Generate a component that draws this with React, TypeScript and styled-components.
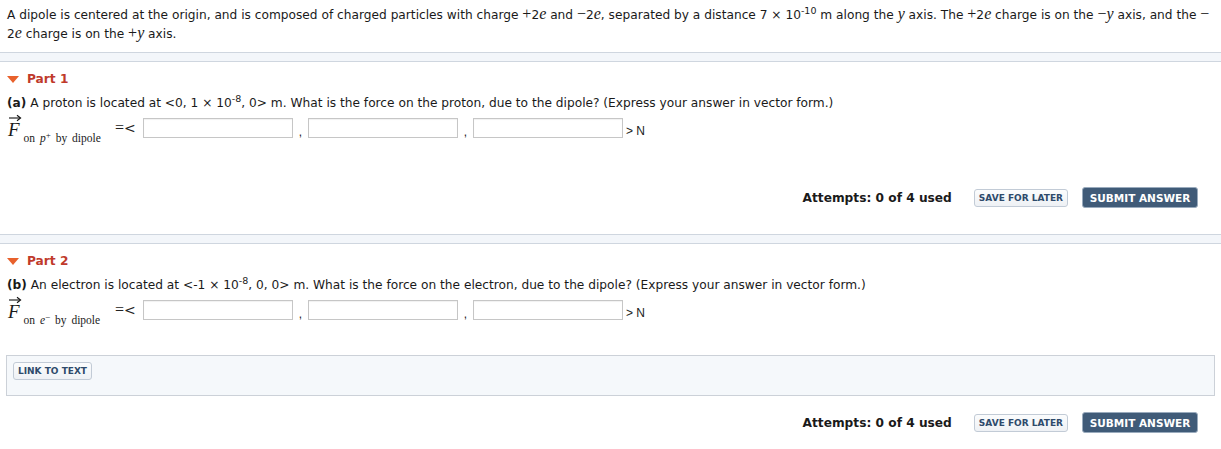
import React from "react";
import styled, { createGlobalStyle } from "styled-components";

const GlobalStyle = createGlobalStyle`
  html, body {
    margin: 0;
    padding: 0;
    background: #ffffff;
  }
  body {
    font-family: "DejaVu Sans", Verdana, sans-serif;
    font-size: 12.2px;
    color: #1a1a1a;
  }
`;

const Page = styled.div`
  width: 1221px;
  height: 449px;
  overflow: hidden;
`;

const Intro = styled.p`
  margin: 0;
  padding: 5px 7px 9px 7px;
  line-height: 18px;
`;

const Band = styled.div`
  height: 8px;
  background: #f3f6fa;
  border-top: 1px solid #cfd6df;
  border-bottom: 1px solid #cfd6df;
`;

const Math = styled.span`
  font-family: "Liberation Serif", "Times New Roman", serif;
  font-size: 16px;
`;

const Var = styled(Math)`
  font-style: italic;
`;

const Sup = styled.sup`
  font-size: 9.5px;
  line-height: 0;
  vertical-align: 5px;
`;

const Part = styled.section`
  padding: 8px 7px 0 7px;
`;

const PartHeader = styled.div`
  display: flex;
  align-items: center;
  gap: 8px;
  height: 18px;
`;

const Caret = styled.span`
  width: 0;
  height: 0;
  border-left: 6px solid transparent;
  border-right: 6px solid transparent;
  border-top: 7px solid #e8612c;
`;

const PartTitle = styled.span`
  color: #c03a2b;
  font-weight: bold;
`;

const Question = styled.div`
  margin-top: 6px;
  line-height: 18px;
`;

const AnswerRow = styled.div`
  display: flex;
  align-items: center;
  margin-top: 6px;
  height: 20px;
`;

const Label = styled.div`
  display: flex;
  align-items: flex-end;
  width: 108px;
  height: 20px;
  font-family: "Liberation Serif", "Times New Roman", serif;
`;

const VecF = styled.span`
  position: relative;
  font-style: italic;
  font-size: 19px;
  line-height: 16px;
  padding: 0 2px 0 1px;
`;

const Arrow = styled.svg`
  position: absolute;
  left: 1px;
  top: -8px;
`;

const Sub = styled.span`
  font-size: 11.5px;
  margin-left: 2px;
  position: relative;
  top: 6px;
  white-space: nowrap;
  word-spacing: 2px;
`;

const SubVar = styled.i`
  font-size: 11.5px;
`;

const Charge = styled.span`
  font-size: 9px;
  position: relative;
  top: -4px;
`;

const Equals = styled.span`
  width: 28px;
  font-size: 14px;
  color: #222;
`;

const Field = styled.input`
  box-sizing: border-box;
  width: 150px;
  height: 20px;
  border: 1px solid #c6c6c6;
  box-shadow: inset 0 1px 1px rgba(0, 0, 0, 0.06);
  padding: 0 4px;
  margin: 0;
  background: #fff;
`;

const Comma = styled.span`
  width: 15px;
  text-align: center;
  align-self: flex-end;
  font-family: "Liberation Sans", Arial, sans-serif;
  font-size: 12px;
  line-height: 12px;
`;

const Unit = styled.span`
  align-self: flex-end;
  margin-left: 3px;
  font-family: "Liberation Sans", Arial, sans-serif;
  font-size: 12px;
  line-height: 12px;
  margin-bottom: 1px;
`;

const Footer = styled.div<{ $top: number }>`
  display: flex;
  justify-content: flex-end;
  align-items: center;
  gap: 14px;
  margin-top: ${(p) => p.$top}px;
  padding-right: 23px;
  height: 21px;
`;

const Attempts = styled.span`
  font-weight: bold;
  margin-right: 8px;
`;

const LightButton = styled.button`
  box-sizing: border-box;
  height: 18px;
  padding: 0 4px;
  font-family: "DejaVu Sans", Verdana, sans-serif;
  font-size: 9px;
  font-weight: bold;
  color: #2e4a6b;
  background: linear-gradient(#fbfcfd, #eef1f5);
  border: 1px solid #c2cbd6;
  border-radius: 3px;
  cursor: pointer;
`;

const DarkButton = styled.button`
  box-sizing: border-box;
  height: 21px;
  width: 116px;
  padding: 0;
  font-family: "DejaVu Sans", Verdana, sans-serif;
  font-size: 10.5px;
  font-weight: bold;
  color: #ffffff;
  background: #405b78;
  border: 1px solid #9aabbd;
  border-radius: 3px;
  cursor: pointer;
`;

const LinkBox = styled.div`
  margin: 35px 6px 0 6px;
  height: 41px;
  box-sizing: border-box;
  padding: 6px 6px;
  background: #f5f8fb;
  border: 1px solid #ccd1d8;
`;

const Spacer = styled.div<{ $h: number }>`
  height: ${(p) => p.$h}px;
`;

const FLabel = ({ who }: { who: "p" | "e" }) => (
  <Label>
    <VecF>
      <Arrow width="14" height="8" viewBox="0 0 14 8">
        <path d="M1 4 H12" stroke="#111" strokeWidth="1.1" fill="none" />
        <path d="M9 1.2 L12.6 4 L9 6.8" stroke="#111" strokeWidth="1.1" fill="none" />
      </Arrow>
      F
    </VecF>
    <Sub>
      on <SubVar>{who}</SubVar>
      <Charge>{who === "p" ? "+" : "−"}</Charge> by dipole
    </Sub>
  </Label>
);

const Answer = ({ who }: { who: "p" | "e" }) => (
  <AnswerRow>
    <FLabel who={who} />
    <Equals>
      <Math>=</Math>&lt;
    </Equals>
    <Field />
    <Comma>,</Comma>
    <Field />
    <Comma>,</Comma>
    <Field />
    <Unit>&gt; N</Unit>
  </AnswerRow>
);

const Actions = ({ top }: { top: number }) => (
  <Footer $top={top}>
    <Attempts>Attempts: 0 of 4 used</Attempts>
    <LightButton>SAVE FOR LATER</LightButton>
    <DarkButton>SUBMIT ANSWER</DarkButton>
  </Footer>
);

export default function App() {
  return (
    <Page>
      <GlobalStyle />
      <Intro>
        A dipole is centered at the origin, and is composed of charged particles with charge{" "}
        <Math>+</Math>2<Var>e</Var> and <Math>−</Math>2<Var>e</Var>, separated by a distance 7 × 10
        <Sup>-10</Sup> m along the <Var>y</Var> axis. The <Math>+</Math>2<Var>e</Var> charge is on
        the <Math>−</Math>
        <Var>y</Var> axis, and the <Math>−</Math> 2<Var>e</Var> charge is on the <Math>+</Math>
        <Var>y</Var> axis.
      </Intro>
      <Band />
      <Part>
        <PartHeader>
          <Caret />
          <PartTitle>Part 1</PartTitle>
        </PartHeader>
        <Question>
          <b>(a)</b> A proton is located at &lt;0, 1 × 10<Sup>-8</Sup>, 0&gt; m. What is the force on
          the proton, due to the dipole? (Express your answer in vector form.)
        </Question>
        <Answer who="p" />
      </Part>
      <Actions top={49} />
      <Spacer $h={26} />
      <Band />
      <Part>
        <PartHeader>
          <Caret />
          <PartTitle>Part 2</PartTitle>
        </PartHeader>
        <Question>
          <b>(b)</b> An electron is located at &lt;-1 × 10<Sup>-8</Sup>, 0, 0&gt; m. What is the force
          on the electron, due to the dipole? (Express your answer in vector form.)
        </Question>
        <Answer who="e" />
      </Part>
      <LinkBox>
        <LightButton>LINK TO TEXT</LightButton>
      </LinkBox>
      <Actions top={16} />
    </Page>
  );
}
